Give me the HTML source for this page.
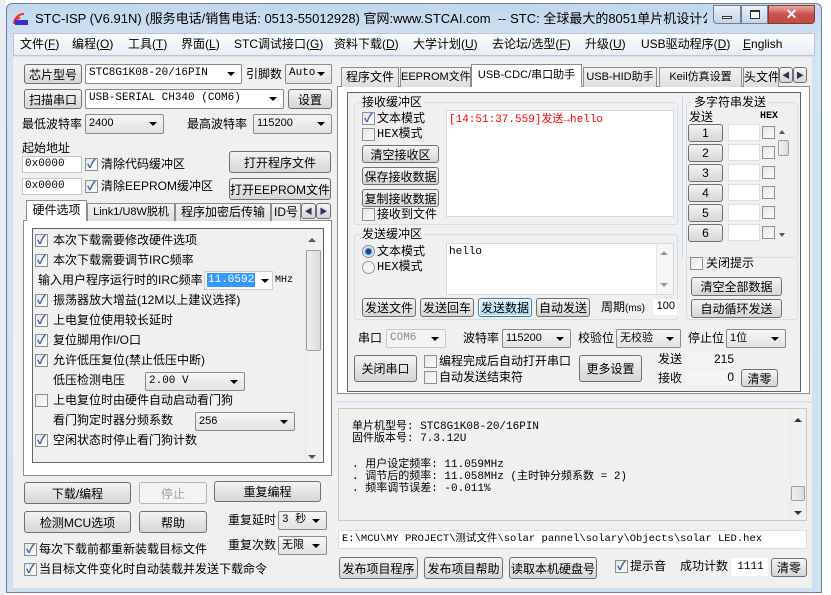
<!DOCTYPE html>
<html><head><meta charset="utf-8"><style>
*{box-sizing:border-box;margin:0;padding:0}
body{width:831px;height:595px;overflow:hidden;background:#fff;position:relative;font:12px "Liberation Sans","Noto Sans CJK SC",sans-serif;color:#000}
.a{position:absolute;white-space:nowrap}
.t{position:absolute;white-space:nowrap;line-height:16px;font-size:12px}
.b{position:absolute;border:1px solid #707070;border-radius:3px;background:linear-gradient(#f4f4f4,#e4e4e4 50%,#d6d6d6);text-align:center;white-space:nowrap;display:flex;align-items:center;justify-content:center;font-size:12px;overflow:hidden}
.cb{position:absolute;width:13px;height:13px;border:1px solid #8e8f8f;background:linear-gradient(135deg,#e6e6e6,#fbfbfb)}
.cb.on::after{content:"✓";position:absolute;left:1px;top:-4px;font-size:12px;font-weight:bold;color:#3a5ea7}
.cbl{position:absolute;white-space:nowrap;line-height:16px;font-size:12px}
.cmb{position:absolute;border:1px solid #8a8a8a;border-radius:2px;background:linear-gradient(#f6f6f6,#e2e2e2);padding-left:3px;line-height:17px;white-space:nowrap;font-size:11px;font-family:"Liberation Mono","Noto Sans CJK SC",monospace;overflow:hidden}
.cmb::after{content:"";position:absolute;right:6px;top:7px;border-left:4px solid transparent;border-right:4px solid transparent;border-top:4px solid #000}
.cmb.w{background:#fff}
.ed{position:absolute;background:#fff;border:1px solid #c6c6c6;line-height:15px;padding-left:2px;white-space:nowrap;font-family:"Liberation Mono",monospace;font-size:11px}
.tab{position:absolute;border:1px solid #8c8c8c;border-bottom:none;background:linear-gradient(#f2f2f2,#dedede);text-align:center;line-height:19px;font-size:12px;white-space:nowrap;overflow:hidden}
.tab.act{background:#fff;z-index:2}
.grp{position:absolute;border:1px solid #d5dfe5;border-radius:3px}
.gt{position:absolute;background:#f0f0f0;padding:0 2px;font-size:12px;line-height:14px}
.m{font-family:"Liberation Mono","Noto Sans CJK SC",monospace}
.sb{position:absolute;background:#f0f0f0;border-left:1px solid #e6e6e6}
.th{position:absolute;border:1px solid #a0a0a0;border-radius:2px;background:linear-gradient(90deg,#f0f0f0,#dcdcdc)}
.up,.dn{position:absolute;width:0;height:0;border-left:4px solid transparent;border-right:4px solid transparent}
.up{border-bottom:4px solid #555}.dn{border-top:4px solid #555}
</style></head><body>
<div class="a" style="left:0;top:0;width:6px;height:595px;background:#e9eef5"></div>
<div class="a" style="left:6px;top:3px;width:816px;height:590px;background:linear-gradient(#c2d6ec,#d4e3f3 40px,#cfe0f1);border:1px solid #6a829e;border-radius:6px 6px 0 0"></div>
<svg class="a" style="left:12px;top:10px" width="18" height="16" viewBox="0 0 18 16"><path d="M2 14a10 10 0 0 1 10-10M2 14a6 6 0 0 1 6-6" stroke="#e33" stroke-width="2" fill="none"/><rect x="3" y="10" width="13" height="5" fill="#33c"/></svg>
<div class="a" style="left:35px;top:10px;font-size:13px;line-height:18px;width:672px;overflow:hidden">STC-ISP (V6.91N) (服务电话/销售电话: 0513-55012928) 官网:www.STCAI.com&nbsp; -- STC: 全球最大的8051单片机设计公司 (...</div>
<div class="a" style="left:713px;top:5px;width:28px;height:19px;border:1px solid #6d7f97;border-radius:0 0 0 4px;background:linear-gradient(#e9f0f8,#c4d4e6)"><div class="a" style="left:8px;top:10px;width:10px;height:3px;border:1px solid #333;background:#fff"></div></div>
<div class="a" style="left:741px;top:5px;width:27px;height:19px;border:1px solid #6d7f97;background:linear-gradient(#e9f0f8,#c4d4e6)"><div class="a" style="left:8px;top:4px;width:10px;height:9px;border:1px solid #333;border-top-width:2px;background:#fff"></div></div>
<div class="a" style="left:768px;top:5px;width:47px;height:19px;border:1px solid #7d3a36;border-radius:0 0 4px 0;background:linear-gradient(#e9a99c,#c75050 50%,#c24a3c);color:#fff;font-weight:bold;font-size:14px;text-align:center;line-height:17px">✕</div>
<div class="a" style="left:13px;top:33px;width:802px;height:23px;background:linear-gradient(#fbfcfd,#eaeef4);border:1px solid #b9c7d8;font-size:12px;line-height:21px">
<span class="a" style="left:6px">文件(<u>F</u>)</span><span class="a" style="left:58px">编程(<u>O</u>)</span><span class="a" style="left:114px">工具(<u>T</u>)</span><span class="a" style="left:167px">界面(<u>L</u>)</span><span class="a" style="left:220px">STC调试接口(<u>G</u>)</span><span class="a" style="left:320px">资料下载(<u>D</u>)</span><span class="a" style="left:399px">大学计划(<u>U</u>)</span><span class="a" style="left:478px">去论坛/选型(<u>F</u>)</span><span class="a" style="left:571px">升级(<u>U</u>)</span><span class="a" style="left:627px">USB驱动程序(<u>D</u>)</span><span class="a" style="left:729px"><u>E</u>nglish</span>
</div>
<div class="a" style="left:13px;top:57px;width:799px;height:531px;background:#f0f0f0"></div>

<div class="b" style="left:24px;top:64px;width:58px;height:20px">芯片型号</div>
<div class="cmb w" style="left:85px;top:64px;width:157px;height:20px">STC8G1K08-20/16PIN</div>
<div class="t" style="left:246px;top:66px">引脚数</div>
<div class="cmb" style="left:285px;top:64px;width:47px;height:20px">Auto</div>
<div class="b" style="left:24px;top:89px;width:58px;height:20px">扫描串口</div>
<div class="cmb w" style="left:85px;top:89px;width:199px;height:20px">USB-SERIAL CH340 (COM6)</div>
<div class="b" style="left:288px;top:89px;width:44px;height:20px">设置</div>
<div class="t" style="left:22px;top:116px">最低波特率</div>
<div class="cmb" style="left:85px;top:114px;width:79px;height:20px;font-family:'Liberation Sans'">2400</div>
<div class="t" style="left:187px;top:116px">最高波特率</div>
<div class="cmb" style="left:253px;top:114px;width:79px;height:20px;font-family:'Liberation Sans'">115200</div>
<div class="t" style="left:22px;top:140px">起始地址</div>
<div class="ed" style="left:22px;top:156px;width:60px;height:17px">0x0000</div>
<div class="cb on" style="left:85px;top:158px"></div><div class="cbl" style="left:101px;top:156px">清除代码缓冲区</div>
<div class="b" style="left:229px;top:151px;width:102px;height:22px">打开程序文件</div>
<div class="ed" style="left:22px;top:178px;width:60px;height:17px">0x0000</div>
<div class="cb on" style="left:85px;top:180px"></div><div class="cbl" style="left:101px;top:178px">清除EEPROM缓冲区</div>
<div class="b" style="left:229px;top:178px;width:102px;height:22px">打开EEPROM文件</div>

<div class="a" style="left:23px;top:220px;width:309px;height:256px;border:1px solid #8c8c8c;background:#fff"></div>
<div class="tab act" style="left:26px;top:200px;width:61px;height:21px">硬件选项</div>
<div class="tab" style="left:87px;top:203px;width:88px;height:18px;line-height:17px;font-size:11px">Link1/U8W脱机</div>
<div class="tab" style="left:175px;top:203px;width:96px;height:18px;line-height:17px">程序加密后传输</div>
<div class="tab" style="left:271px;top:203px;width:30px;height:18px;line-height:17px">ID号</div>
<div class="b" style="left:301px;top:203px;width:15px;height:16px;font-size:8px;color:#335">◀</div>
<div class="b" style="left:316px;top:203px;width:15px;height:16px;font-size:8px;color:#335">▶</div>
<div class="a" style="left:32px;top:228px;width:292px;height:235px;border:1px solid #646464;background:#f0f0f0"></div>
<div class="sb" style="left:305px;top:229px;width:18px;height:233px"></div>
<div class="up" style="left:308px;top:238px"></div><div class="dn" style="left:308px;top:455px"></div>
<div class="th" style="left:306px;top:250px;width:15px;height:101px"></div>
<div class="cb on" style="left:35px;top:234px"></div><div class="cbl" style="left:53px;top:232px">本次下载需要修改硬件选项</div>
<div class="cb on" style="left:35px;top:254px"></div><div class="cbl" style="left:53px;top:252px">本次下载需要调节IRC频率</div>
<div class="cbl" style="left:38px;top:272px">输入用户程序运行时的IRC频率</div>
<div class="a" style="left:204px;top:271px;width:69px;height:19px;background:#fff;border:1px solid #ccc"><span class="a m" style="left:2px;top:1px;background:#3399ff;color:#fff;line-height:14px;padding:0 1px;font-size:11px">11.0592</span><div class="dn" style="left:56px;top:7px;border-top-color:#000"></div></div>
<div class="t m" style="left:275px;top:273px;font-size:10px">MHz</div>
<div class="cb on" style="left:35px;top:294px"></div><div class="cbl" style="left:53px;top:292px">振荡器放大增益(12M以上建议选择)</div>
<div class="cb on" style="left:35px;top:314px"></div><div class="cbl" style="left:53px;top:312px">上电复位使用较长延时</div>
<div class="cb on" style="left:35px;top:334px"></div><div class="cbl" style="left:53px;top:332px">复位脚用作I/O口</div>
<div class="cb on" style="left:35px;top:354px"></div><div class="cbl" style="left:53px;top:352px">允许低压复位(禁止低压中断)</div>
<div class="cbl" style="left:53px;top:372px">低压检测电压</div>
<div class="cmb" style="left:145px;top:372px;width:100px;height:19px">2.00 V</div>
<div class="cb" style="left:35px;top:394px"></div><div class="cbl" style="left:53px;top:392px">上电复位时由硬件自动启动看门狗</div>
<div class="cbl" style="left:53px;top:412px">看门狗定时器分频系数</div>
<div class="cmb" style="left:195px;top:412px;width:100px;height:19px;font-family:'Liberation Sans'">256</div>
<div class="cb on" style="left:35px;top:434px"></div><div class="cbl" style="left:53px;top:432px">空闲状态时停止看门狗计数</div>

<div class="b" style="left:24px;top:482px;width:107px;height:22px">下载/编程</div>
<div class="b" style="left:139px;top:482px;width:68px;height:22px;color:#a0a0a0;border-color:#b5b5b5;background:#f4f4f4">停止</div>
<div class="b" style="left:214px;top:481px;width:107px;height:21px">重复编程</div>
<div class="b" style="left:24px;top:511px;width:107px;height:22px">检测MCU选项</div>
<div class="b" style="left:139px;top:511px;width:68px;height:22px">帮助</div>
<div class="t" style="left:228px;top:512px">重复延时</div>
<div class="cmb" style="left:278px;top:511px;width:49px;height:19px">3 秒</div>
<div class="t" style="left:228px;top:537px">重复次数</div>
<div class="cmb" style="left:278px;top:536px;width:49px;height:19px;font-family:'Liberation Sans','Noto Sans CJK SC'">无限</div>
<div class="cb on" style="left:24px;top:543px"></div><div class="cbl" style="left:39px;top:541px">每次下载前都重新装载目标文件</div>
<div class="cb on" style="left:24px;top:563px"></div><div class="cbl" style="left:39px;top:561px">当目标文件变化时自动装载并发送下载命令</div>

<div class="a" style="left:337px;top:86px;width:473px;height:308px;border:1px solid #8c8c8c;background:#fff"></div>
<div class="tab" style="left:341px;top:67px;width:58px;height:20px">程序文件</div>
<div class="tab" style="left:400px;top:67px;width:71px;height:20px;font-size:11px">EEPROM文件</div>
<div class="tab act" style="left:471px;top:64px;width:111px;height:23px;line-height:20px;font-size:11px">USB-CDC/串口助手</div>
<div class="tab" style="left:583px;top:67px;width:74px;height:20px;font-size:11px">USB-HID助手</div>
<div class="tab" style="left:659px;top:67px;width:83px;height:20px;font-size:11px">Keil仿真设置</div>
<div class="tab" style="left:743px;top:67px;width:36px;height:20px">头文件</div>
<div class="b" style="left:779px;top:67px;width:14px;height:16px;font-size:8px;color:#335">◀</div>
<div class="b" style="left:793px;top:67px;width:14px;height:16px;font-size:8px;color:#335">▶</div>
<div class="a" style="left:347px;top:92px;width:454px;height:300px;border:1px solid #646464;background:#f0f0f0"></div>
<div class="a" style="left:682px;top:96px;width:1px;height:162px;background:#c7dbef"></div>

<div class="grp" style="left:354px;top:102px;width:324px;height:123px"></div>
<div class="gt" style="left:360px;top:95px">接收缓冲区</div>
<div class="cb on" style="left:362px;top:112px"></div><div class="cbl" style="left:377px;top:110px">文本模式</div>
<div class="cb" style="left:362px;top:128px"></div><div class="cbl m" style="left:377px;top:126px">HEX模式</div>
<div class="b" style="left:362px;top:145px;width:77px;height:18px">清空接收区</div>
<div class="b" style="left:362px;top:167px;width:77px;height:18px">保存接收数据</div>
<div class="b" style="left:362px;top:189px;width:77px;height:18px">复制接收数据</div>
<div class="cb" style="left:362px;top:208px"></div><div class="cbl" style="left:377px;top:206px">接收到文件</div>
<div class="a" style="left:446px;top:110px;width:228px;height:107px;background:#fff;border:1px solid #d8d8d8"></div>
<div class="t m" style="left:449px;top:112px;color:#f00;font-size:11px">[14:51:37.559]发送→hello</div>

<div class="grp" style="left:354px;top:234px;width:324px;height:86px"></div>
<div class="gt" style="left:360px;top:227px">发送缓冲区</div>
<div class="a" style="left:362px;top:245px;width:13px;height:13px;border-radius:50%;border:1px solid #888;background:radial-gradient(#0c4aa0 30%,#8fb8e6 45%,#f0f0f0 60%)"></div><div class="cbl" style="left:377px;top:243px">文本模式</div>
<div class="a" style="left:362px;top:261px;width:13px;height:13px;border-radius:50%;border:1px solid #999;background:#f3f3f3"></div><div class="cbl m" style="left:377px;top:259px">HEX模式</div>
<div class="a" style="left:446px;top:243px;width:228px;height:52px;background:#fff;border:1px solid #d8d8d8"></div>
<div class="sb" style="left:656px;top:244px;width:17px;height:50px;background:#f6f6f6"></div>
<div class="up" style="left:660px;top:251px;border-bottom-color:#999"></div><div class="dn" style="left:660px;top:283px;border-top-color:#999"></div>
<div class="t m" style="left:449px;top:244px;font-size:11px">hello</div>
<div class="b" style="left:362px;top:298px;width:54px;height:19px">发送文件</div>
<div class="b" style="left:420px;top:298px;width:54px;height:19px">发送回车</div>
<div class="b" style="left:478px;top:298px;width:54px;height:19px;border-color:#3c7fb1;background:linear-gradient(#e5f4fc,#a7d9f5);box-shadow:inset 0 0 0 1px #fff">发送数据</div>
<div class="b" style="left:536px;top:298px;width:54px;height:19px">自动发送</div>
<div class="t" style="left:601px;top:299px">周期<span style="font-size:10px">(ms)</span></div>
<div class="ed" style="left:652px;top:298px;width:26px;height:18px;text-align:right;padding-right:2px;font-family:'Liberation Sans';border-color:#eee">100</div>

<div class="grp" style="left:686px;top:102px;width:112px;height:156px"></div>
<div class="gt" style="left:692px;top:95px">多字符串发送</div>
<div class="t" style="left:689px;top:109px">发送</div>
<div class="t m" style="left:760px;top:109px;font-size:10px;font-weight:bold">HEX</div>
<div class="b" style="left:688px;top:124px;width:35px;height:18px">1</div>
<div class="b" style="left:688px;top:144px;width:35px;height:18px">2</div>
<div class="b" style="left:688px;top:164px;width:35px;height:18px">3</div>
<div class="b" style="left:688px;top:184px;width:35px;height:18px">4</div>
<div class="b" style="left:688px;top:204px;width:35px;height:18px">5</div>
<div class="b" style="left:688px;top:224px;width:35px;height:18px">6</div>
<div class="ed" style="left:728px;top:124px;width:32px;height:17px;border-color:#e0e0e0"></div>
<div class="ed" style="left:728px;top:144px;width:32px;height:17px;border-color:#e0e0e0"></div>
<div class="ed" style="left:728px;top:164px;width:32px;height:17px;border-color:#e0e0e0"></div>
<div class="ed" style="left:728px;top:184px;width:32px;height:17px;border-color:#e0e0e0"></div>
<div class="ed" style="left:728px;top:204px;width:32px;height:17px;border-color:#e0e0e0"></div>
<div class="ed" style="left:728px;top:224px;width:32px;height:17px;border-color:#e0e0e0"></div>
<div class="cb" style="left:762px;top:126px"></div><div class="cb" style="left:762px;top:146px"></div><div class="cb" style="left:762px;top:166px"></div><div class="cb" style="left:762px;top:186px"></div><div class="cb" style="left:762px;top:206px"></div><div class="cb" style="left:762px;top:226px"></div>
<div class="sb" style="left:777px;top:124px;width:13px;height:120px;border:none"></div>
<div class="up" style="left:779px;top:130px;border-left-width:3px;border-right-width:3px"></div><div class="dn" style="left:779px;top:233px;border-left-width:3px;border-right-width:3px"></div>
<div class="th" style="left:778px;top:140px;width:11px;height:16px"></div>
<div class="cb" style="left:690px;top:257px"></div><div class="cbl" style="left:706px;top:255px">关闭提示</div>
<div class="b" style="left:691px;top:277px;width:91px;height:19px">清空全部数据</div>
<div class="b" style="left:691px;top:299px;width:91px;height:19px">自动循环发送</div>
<div class="a" style="left:686px;top:258px;width:112px;height:62px;border:1px solid #d5dfe5;border-top:none;border-radius:0 0 3px 3px"></div>

<div class="t" style="left:358px;top:330px">串口</div>
<div class="cmb" style="left:386px;top:329px;width:60px;height:19px;color:#888;border-color:#c8c8c8;background:#f4f4f4">COM6</div>
<div class="t" style="left:463px;top:330px">波特率</div>
<div class="cmb" style="left:502px;top:329px;width:69px;height:19px;font-family:'Liberation Sans'">115200</div>
<div class="t" style="left:578px;top:330px">校验位</div>
<div class="cmb" style="left:616px;top:329px;width:65px;height:19px;font-family:'Liberation Sans','Noto Sans CJK SC'">无校验</div>
<div class="t" style="left:688px;top:330px">停止位</div>
<div class="cmb" style="left:726px;top:329px;width:60px;height:19px;font-family:'Liberation Sans','Noto Sans CJK SC'">1位</div>
<div class="b" style="left:354px;top:355px;width:63px;height:27px">关闭串口</div>
<div class="cb" style="left:424px;top:355px"></div><div class="cbl" style="left:439px;top:353px">编程完成后自动打开串口</div>
<div class="cb" style="left:424px;top:371px"></div><div class="cbl" style="left:439px;top:369px">自动发送结束符</div>
<div class="b" style="left:579px;top:355px;width:63px;height:27px">更多设置</div>
<div class="t" style="left:658px;top:351px">发送</div>
<div class="a" style="left:686px;top:352px;width:51px;height:15px;background:#f4f4f4;text-align:right;padding-right:3px;line-height:15px">215</div>
<div class="t" style="left:658px;top:370px">接收</div>
<div class="a" style="left:686px;top:370px;width:51px;height:15px;background:#f4f4f4;text-align:right;padding-right:3px;line-height:15px">0</div>
<div class="b" style="left:741px;top:369px;width:37px;height:18px">清零</div>

<div class="a" style="left:337px;top:401px;width:475px;height:2px;background:#d6e4f2"></div>
<div class="a" style="left:338px;top:408px;width:469px;height:113px;border:1px solid #c8c8c8;background:#f0f0f0"></div>
<div class="sb" style="left:790px;top:409px;width:16px;height:111px"></div>
<div class="up" style="left:794px;top:418px;border-bottom-color:#333"></div><div class="dn" style="left:794px;top:511px;border-top-color:#333"></div>
<div class="th" style="left:791px;top:486px;width:14px;height:15px"></div>
<div class="a m" style="left:352px;top:421px;font-size:11px;line-height:12px">单片机型号: STC8G1K08-20/16PIN<br>固件版本号: 7.3.12U</div>
<div class="a m" style="left:352px;top:459px;font-size:11px;line-height:12px">. 用户设定频率: 11.059MHz<br>. 调节后的频率: 11.058MHz (主时钟分频系数 = 2)<br>. 频率调节误差: -0.011%</div>
<div class="a m" style="left:338px;top:530px;width:469px;height:19px;border:1px solid #dcdcdc;background:#fff;padding-left:3px;line-height:17px;font-size:10.5px;overflow:hidden">E:\MCU\MY PROJECT\测试文件\solar pannel\solary\Objects\solar LED.hex</div>
<div class="b" style="left:339px;top:557px;width:79px;height:22px">发布项目程序</div>
<div class="b" style="left:424px;top:557px;width:79px;height:22px">发布项目帮助</div>
<div class="b" style="left:509px;top:557px;width:88px;height:22px">读取本机硬盘号</div>
<div class="cb on" style="left:615px;top:560px"></div><div class="cbl" style="left:630px;top:558px">提示音</div>
<div class="t" style="left:680px;top:558px">成功计数</div>
<div class="ed" style="left:730px;top:557px;width:39px;height:20px;line-height:18px;text-align:center;border-color:#eee">1111</div>
<div class="b" style="left:771px;top:558px;width:36px;height:19px">清零</div>
</body></html>
